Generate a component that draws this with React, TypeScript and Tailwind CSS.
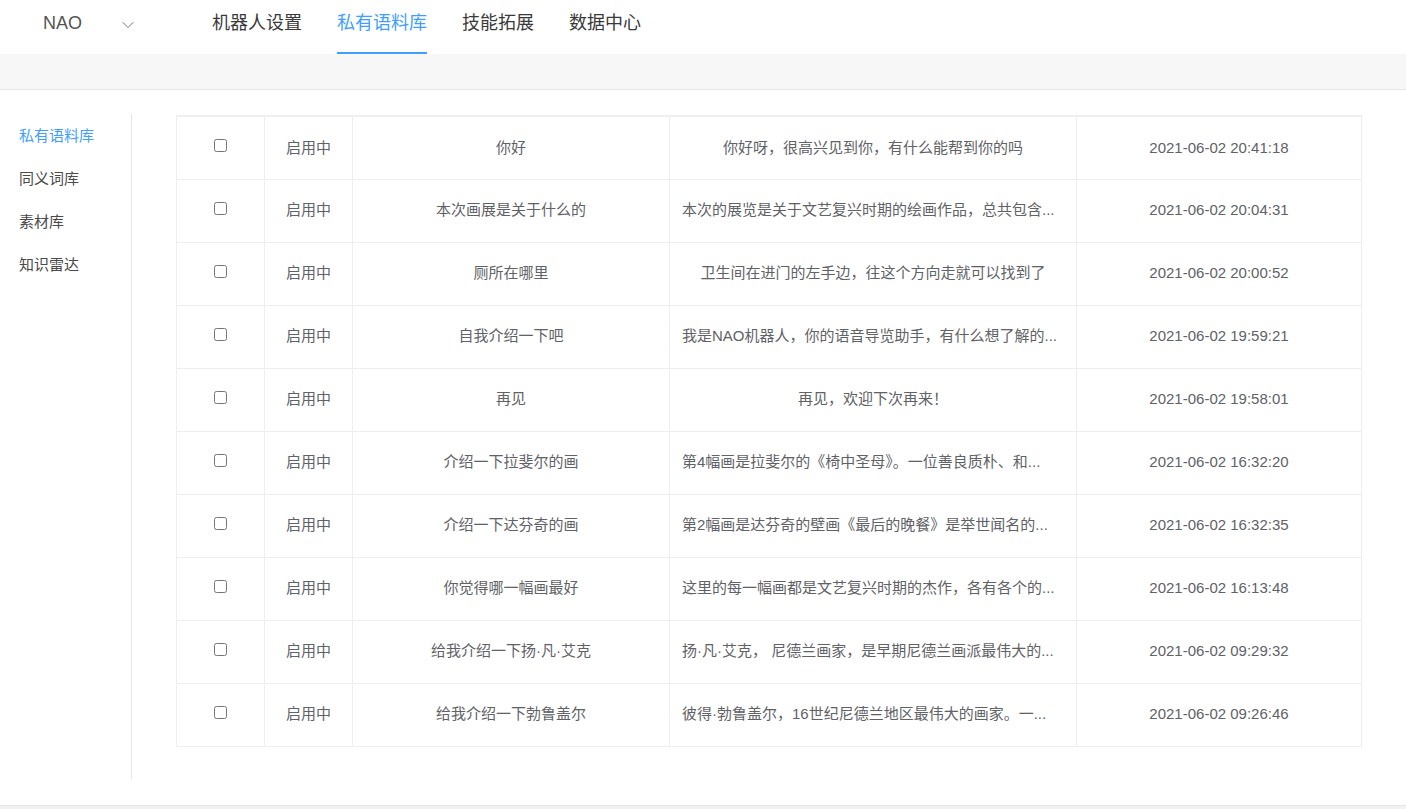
import { ChevronDown } from 'lucide-react';

const navItems = ['机器人设置', '私有语料库', '技能拓展', '数据中心'];
const sideItems = ['私有语料库', '同义词库', '素材库', '知识雷达'];

// cut: answer was shortened in the list, so it hugs the left padding
const rows = [
  { q: '你好', a: '你好呀，很高兴见到你，有什么能帮到你的吗', t: '2021-06-02 20:41:18', cut: false },
  { q: '本次画展是关于什么的', a: '本次的展览是关于文艺复兴时期的绘画作品，总共包含...', t: '2021-06-02 20:04:31', cut: true },
  { q: '厕所在哪里', a: '卫生间在进门的左手边，往这个方向走就可以找到了', t: '2021-06-02 20:00:52', cut: false },
  { q: '自我介绍一下吧', a: '我是NAO机器人，你的语音导览助手，有什么想了解的...', t: '2021-06-02 19:59:21', cut: true },
  { q: '再见', a: '再见，欢迎下次再来！', t: '2021-06-02 19:58:01', cut: false },
  { q: '介绍一下拉斐尔的画', a: '第4幅画是拉斐尔的《椅中圣母》。一位善良质朴、和...', t: '2021-06-02 16:32:20', cut: true },
  { q: '介绍一下达芬奇的画', a: '第2幅画是达芬奇的壁画《最后的晚餐》是举世闻名的...', t: '2021-06-02 16:32:35', cut: true },
  { q: '你觉得哪一幅画最好', a: '这里的每一幅画都是文艺复兴时期的杰作，各有各个的...', t: '2021-06-02 16:13:48', cut: true },
  { q: '给我介绍一下扬·凡·艾克', a: '扬·凡·艾克， 尼德兰画家，是早期尼德兰画派最伟大的...', t: '2021-06-02 09:29:32', cut: true },
  { q: '给我介绍一下勃鲁盖尔', a: '彼得·勃鲁盖尔，16世纪尼德兰地区最伟大的画家。一...', t: '2021-06-02 09:26:46', cut: true },
];

export default function App() {
  return (
    <div
      className="w-[1406px] h-[809px] overflow-hidden bg-white flex flex-col"
      style={{ fontFamily: '"Liberation Sans", "Noto Sans CJK SC", sans-serif' }}
    >
      {/* top nav */}
      <div className="h-[54px] flex items-start shrink-0">
        <div className="w-[212px] h-[46px] flex items-center pl-[43px] text-[18px] text-[#555]">
          <span>NAO</span>
          <ChevronDown size={20} strokeWidth={1.1} className="ml-[36px] mt-[3px] text-[#666]" />
        </div>
        <div className="flex gap-[35px]">
          {navItems.map((item, i) => (
            <div
              key={item}
              className={
                i === 1
                  ? 'h-[54px] border-b-2 border-[#409eff] text-[#409eff] text-[18px] leading-[46px]'
                  : 'h-[54px] border-b-2 border-transparent text-[#3a3a3a] text-[18px] leading-[46px]'
              }
            >
              {item}
            </div>
          ))}
        </div>
      </div>
      <div className="h-[36px] shrink-0 bg-[#f7f7f7] border-b border-[#e6e6e6]" />

      {/* main */}
      <div className="flex pt-[25px] h-[690px] shrink-0">
        <div className="w-[132px] h-[665px] border-r border-[#e6e6e6] -mt-[1px]">
          {sideItems.map((item, i) => (
            <div
              key={item}
              className={
                i === 0
                  ? 'pl-[19px] h-[43px] leading-[43px] text-[15px] text-[#409eff]'
                  : 'pl-[19px] h-[43px] leading-[43px] text-[15px] text-[#4a4a4a]'
              }
            >
              {item}
            </div>
          ))}
        </div>
        <div className="ml-[44px]">
          <table className="table-fixed border-collapse w-[1185px] border-t-2 border-[#efefef] text-[15px] text-[#606266]">
            <colgroup>
              <col className="w-[88px]" />
              <col className="w-[88px]" />
              <col className="w-[317px]" />
              <col className="w-[407px]" />
              <col className="w-[285px]" />
            </colgroup>
            <tbody>
              {rows.map((r) => (
                <tr key={r.t} className="h-[63px]">
                  <td className="border border-[#ebeef5] text-center">
                    <input type="checkbox" className="relative -top-[3px] align-middle" />
                  </td>
                  <td className="border border-[#ebeef5] text-center">启用中</td>
                  <td className="border border-[#ebeef5] text-center px-3 truncate">{r.q}</td>
                  <td
                    className={
                      r.cut
                        ? 'border border-[#ebeef5] text-left px-3 truncate'
                        : 'border border-[#ebeef5] text-center px-3 truncate'
                    }
                  >
                    {r.a}
                  </td>
                  <td className="border border-[#ebeef5] text-center px-3">{r.t}</td>
                </tr>
              ))}
            </tbody>
          </table>
        </div>
      </div>

      <div className="mt-auto h-[4px] bg-[#f2f2f2] border-t border-[#e6e6e6]" />
    </div>
  );
}
